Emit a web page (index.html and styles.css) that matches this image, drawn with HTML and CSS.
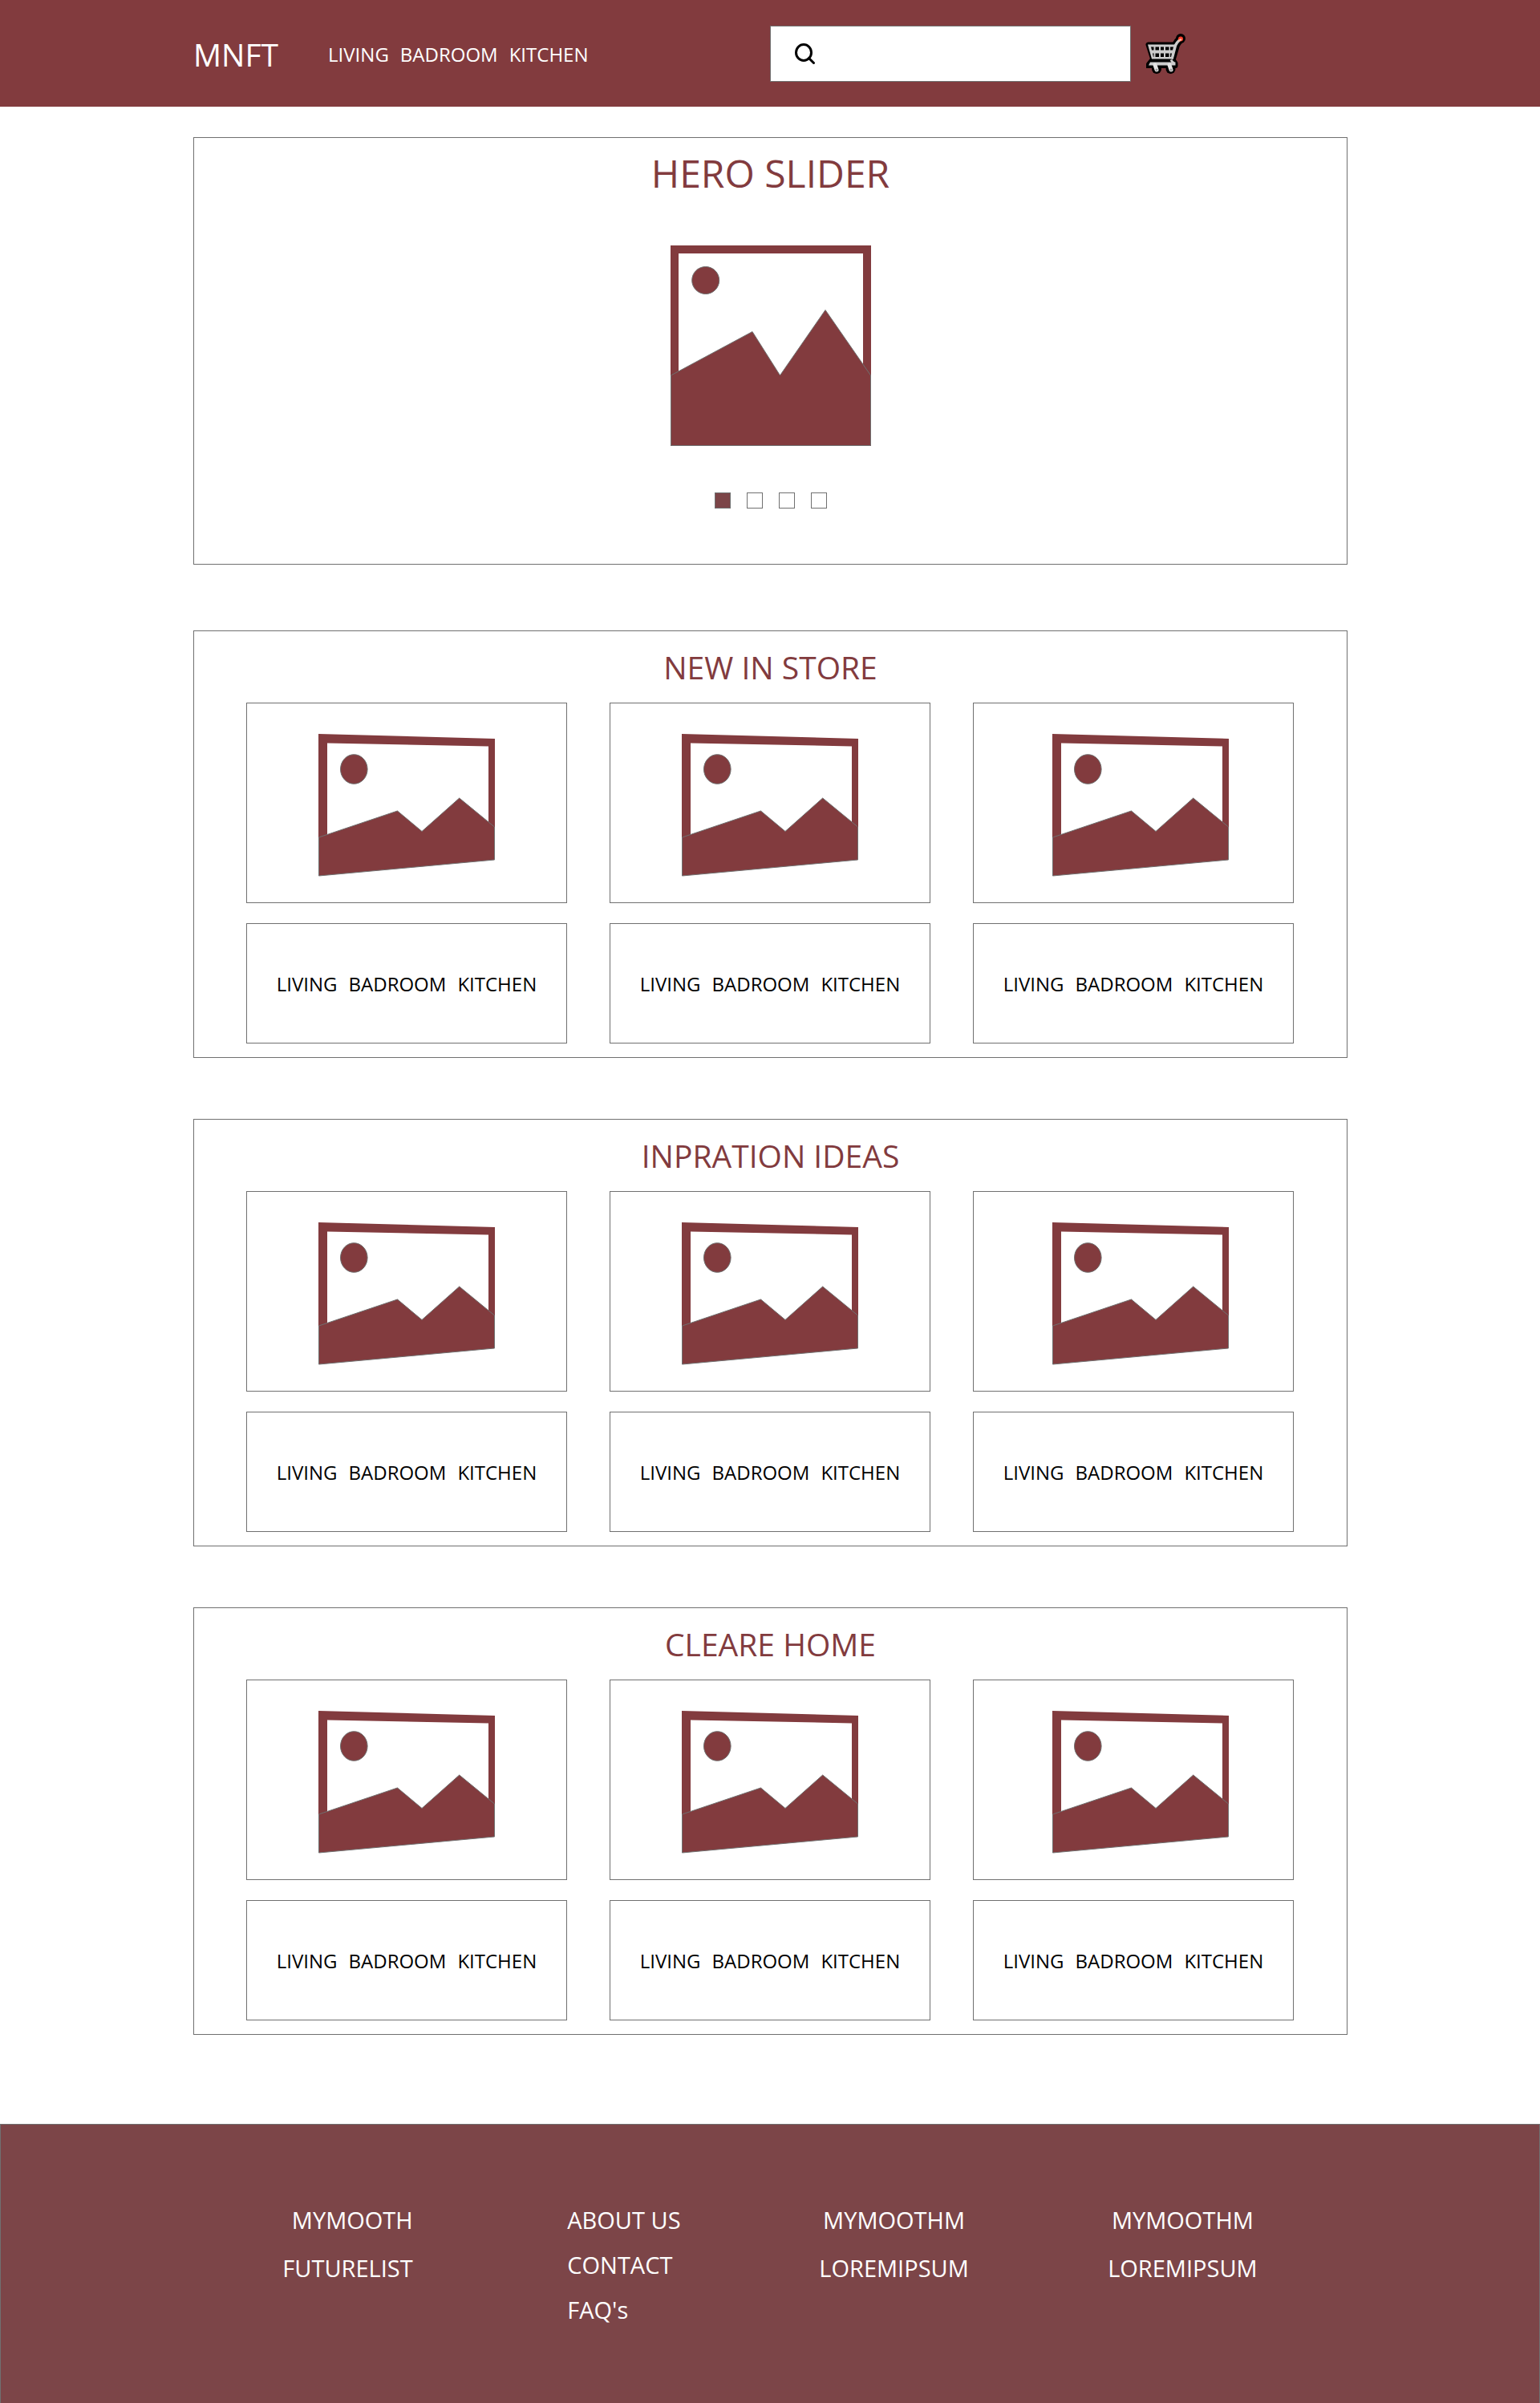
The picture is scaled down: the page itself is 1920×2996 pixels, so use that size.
FILE: index.html
```html
<!DOCTYPE html>
<html lang="en">
<head>
<meta charset="utf-8">
<meta name="viewport" content="width=device-width, initial-scale=1">
<title>MNFT</title>
<link rel="stylesheet" href="styles.css">
</head>
<body>
<svg class="sprite" aria-hidden="true">
  <symbol id="photo" viewBox="0 0 220 178">
    <path fill="#823b3e" fill-rule="evenodd" d="M0 0L220 6V150L0 170ZM11 11.5V150H212V15.5Z"/>
    <g fill="#823b3e" stroke="#707070">
      <ellipse cx="44.3" cy="44" rx="16.8" ry="18.3"/>
      <path d="M.5 129L98.5 96L129 121.5L175.7 80L219.5 116V157L.5 177Z"/>
    </g>
  </symbol>
</svg>

<header class="header">
  <div class="header-left">
    <a class="logo" href="#">MNFT</a>
    <nav class="links nav" aria-label="Main"><a href="#">LIVING</a><a href="#">BADROOM</a><a href="#">KITCHEN</a></nav>
  </div>
  <div class="header-right">
    <form class="search" role="search">
      <svg class="search-icon" viewBox="0 0 26 26" aria-hidden="true"><g fill="none" stroke="#000" stroke-width="3" stroke-linecap="round"><ellipse cx="11" cy="11.5" rx="9.5" ry="10"/><path d="M17.5 18.5L23.5 24.5"/></g></svg>
      <input class="search-input" type="search" aria-label="Search">
    </form>
    <a class="cart" href="#" aria-label="Cart">
      <svg viewBox="0 0 50 50" width="50" height="50" aria-hidden="true">
        <g fill="#000" stroke="#000" stroke-width="6" stroke-linejoin="round">
          <path d="M3.5 13.500H36.500L33.500 31H9Z"/>
          <path d="M33.500 31L37.500 37V40H4V38L8 33Z"/>
        </g>
        <path d="M4 38V43" stroke="#000" stroke-width="6"/>
        <path d="M33 31L38 14Q39.500 10.500 44 6.500" fill="none" stroke="#000" stroke-width="10"/>
        <circle cx="44" cy="6" r="6"/>
        <circle cx="14" cy="44" r="6"/><circle cx="31.500" cy="44" r="6"/>
        <path fill="#ccc" d="M3 13.500H37.500L34 31.500H8Z"/>
        <path d="M33 31.500L37.500 14.500Q39 11 43 7.500" fill="none" stroke="#ccc" stroke-width="3.500"/>
        <circle cx="44" cy="6.500" r="3" fill="#f8402c"/><path d="M41 9L45 7" stroke="#ffc0a8" stroke-width="2"/>
        <path d="M7 16.500H10.500V20.500H8ZM12.500 16.500H17V20.500H12.500ZM19 16.500H23V20.500H19ZM25 16.500H29.500V20.500H25ZM31 16.500H35L34 20.500H31ZM9 24.500H10.500V29H10ZM12.500 24.500H17V29H12.500ZM19 24.500H23V29H19ZM25 24.500H29.500V29H25ZM31 24.500H33L32 29H31Z"/>
        <path d="M32 32.500Q33.500 36 36 37" fill="none" stroke="#ccc" stroke-width="3"/>
        <path fill="#ccc" d="M6 35.500H37.500V39.500H4Z"/>
        <path d="M12 39L14 45M30 39L32 45" stroke="#e4e4e4" stroke-width="5" stroke-linecap="round"/>
        <circle cx="14" cy="45" r="1.500" fill="#999"/><circle cx="32" cy="45" r="1.500" fill="#999"/>
      </svg>
    </a>
  </div>
</header>

<main class="main">
  <section class="panel hero">
    <h1 class="hero-title">HERO SLIDER</h1>
    <svg class="hero-image" viewBox="0 0 250 250" role="img" aria-label="Slide image">
      <path fill="#823b3e" fill-rule="evenodd" d="M0 0H250V250H0ZM10 10V200H240V10Z"/>
      <g fill="#823b3e" stroke="#707070">
        <circle cx="43.700" cy="43.500" r="17"/>
        <path d="M.5 162L102 107.500L136.500 162L193 80.500L249.500 162V249.500H.5Z"/>
      </g>
    </svg>
    <div class="dots">
      <button class="dot dot-active" type="button" aria-label="Slide 1"></button>
      <button class="dot" type="button" aria-label="Slide 2"></button>
      <button class="dot" type="button" aria-label="Slide 3"></button>
      <button class="dot" type="button" aria-label="Slide 4"></button>
    </div>
  </section>

  <section class="panel">
    <h2 class="title">NEW IN STORE</h2>
    <div class="cards">
      <div class="card picture"><svg class="photo"><use href="#photo"/></svg></div>
      <div class="card picture"><svg class="photo"><use href="#photo"/></svg></div>
      <div class="card picture picture-last"><svg class="photo"><use href="#photo"/></svg></div>
      <div class="card links"><a href="#">LIVING</a><a href="#">BADROOM</a><a href="#">KITCHEN</a></div>
      <div class="card links"><a href="#">LIVING</a><a href="#">BADROOM</a><a href="#">KITCHEN</a></div>
      <div class="card links"><a href="#">LIVING</a><a href="#">BADROOM</a><a href="#">KITCHEN</a></div>
    </div>
  </section>

  <section class="panel">
    <h2 class="title">INPRATION IDEAS</h2>
    <div class="cards">
      <div class="card picture"><svg class="photo"><use href="#photo"/></svg></div>
      <div class="card picture"><svg class="photo"><use href="#photo"/></svg></div>
      <div class="card picture picture-last"><svg class="photo"><use href="#photo"/></svg></div>
      <div class="card links"><a href="#">LIVING</a><a href="#">BADROOM</a><a href="#">KITCHEN</a></div>
      <div class="card links"><a href="#">LIVING</a><a href="#">BADROOM</a><a href="#">KITCHEN</a></div>
      <div class="card links"><a href="#">LIVING</a><a href="#">BADROOM</a><a href="#">KITCHEN</a></div>
    </div>
  </section>

  <section class="panel">
    <h2 class="title">CLEARE HOME</h2>
    <div class="cards">
      <div class="card picture"><svg class="photo"><use href="#photo"/></svg></div>
      <div class="card picture"><svg class="photo"><use href="#photo"/></svg></div>
      <div class="card picture picture-last"><svg class="photo"><use href="#photo"/></svg></div>
      <div class="card links"><a href="#">LIVING</a><a href="#">BADROOM</a><a href="#">KITCHEN</a></div>
      <div class="card links"><a href="#">LIVING</a><a href="#">BADROOM</a><a href="#">KITCHEN</a></div>
      <div class="card links"><a href="#">LIVING</a><a href="#">BADROOM</a><a href="#">KITCHEN</a></div>
    </div>
  </section>
</main>

<footer class="footer">
  <div class="footer-col footer-col-end"><a href="#">MYMOOTH</a><a href="#">FUTURELIST</a></div>
  <div class="footer-col footer-col-start"><a href="#">ABOUT US</a><a href="#">CONTACT</a><a href="#">FAQ's</a></div>
  <div class="footer-col"><a href="#">MYMOOTHM</a><a href="#">LOREMIPSUM</a></div>
  <div class="footer-col"><a href="#">MYMOOTHM</a><a href="#">LOREMIPSUM</a></div>
</footer>
</body>
</html>
```

FILE: styles.css
```css
* {
  box-sizing: border-box;
}

body {
  margin: 0;
  background: #fff;
  color: #000;
  font-family: "Open Sans", "Noto Sans", sans-serif;
  font-size: 24px;
}

a {
  color: inherit;
  text-decoration: none;
}

svg {
  display: block;
}

.sprite {
  display: none;
}

.header {
  display: grid;
  grid-template-columns: 1fr 1fr;
  align-items: center;
  height: 133px;
  padding: 0 12.5%;
  background: #823b3e;
  color: #fff;
}

.header-left,
.header-right {
  display: flex;
  align-items: center;
}

.header-left {
  gap: 62px;
  padding: 2px 0 0 1px;
}

.header-right {
  gap: 18px;
}

.logo {
  font-size: 39px;
}

.links {
  display: flex;
  align-items: center;
  justify-content: center;
  gap: 14px;
}

.search {
  display: flex;
  align-items: center;
  width: 450px;
  height: 70px;
  padding-left: 30px;
  gap: 12px;
  border: 1px solid #707070;
  background: #fff;
}

.search-icon {
  width: 26px;
  height: 26px;
}

.search-input {
  flex: 1;
  min-width: 0;
  height: 100%;
  border: 0;
  outline: 0;
  background: none;
  font: inherit;
}

.main {
  display: flex;
  flex-direction: column;
  gap: 76px;
  padding: 38px 12.5% 111px;
}

.panel {
  margin-left: 1px;
  border: 1px solid #707070;
}

.hero {
  display: flex;
  flex-direction: column;
  align-items: center;
  margin-bottom: 6px;
  padding-bottom: 69px;
}

.hero-title,
.title {
  margin: 0;
  color: #823b3e;
  font-weight: 400;
  text-align: center;
}

.hero-title {
  font-size: 48px;
  line-height: 88px;
}

.hero-image {
  width: 250px;
  height: 250px;
  margin: 46px 0 58px;
}

.dots {
  display: flex;
  gap: 20px;
}

.dot {
  width: 20px;
  height: 20px;
  padding: 0;
  border: 1px solid #707070;
  background: #fff;
}

.dot-active {
  background: #7c4548;
}

.title {
  font-size: 39px;
  line-height: 89px;
}

.cards {
  display: grid;
  grid-template-columns: repeat(3, 1fr);
  grid-template-rows: 250px 150px;
  gap: 25px 53px;
  padding: 0 66px 17px 65px;
}

.card {
  border: 1px solid #707070;
}

.picture {
  display: flex;
  align-items: flex-start;
  justify-content: center;
  padding-top: 38px;
}

.picture-last {
  padding-left: 18px;
}

.photo {
  width: 220px;
  height: 178px;
}

.footer {
  display: grid;
  grid-template-columns: 357fr 316fr 362fr 182fr;
  justify-items: start;
  align-items: start;
  min-height: 348px;
  padding: 99px 18.3%;
  border: 1px solid #707070;
  border-bottom: 0;
  background: #7c4548;
  color: #fff;
  font-size: 29px;
  line-height: 40px;
}

.footer-col {
  display: flex;
  flex-direction: column;
  align-items: center;
  gap: 20px;
}

.footer-col-end {
  align-items: flex-end;
}

.footer-col-start {
  align-items: flex-start;
  gap: 16px;
}
```
